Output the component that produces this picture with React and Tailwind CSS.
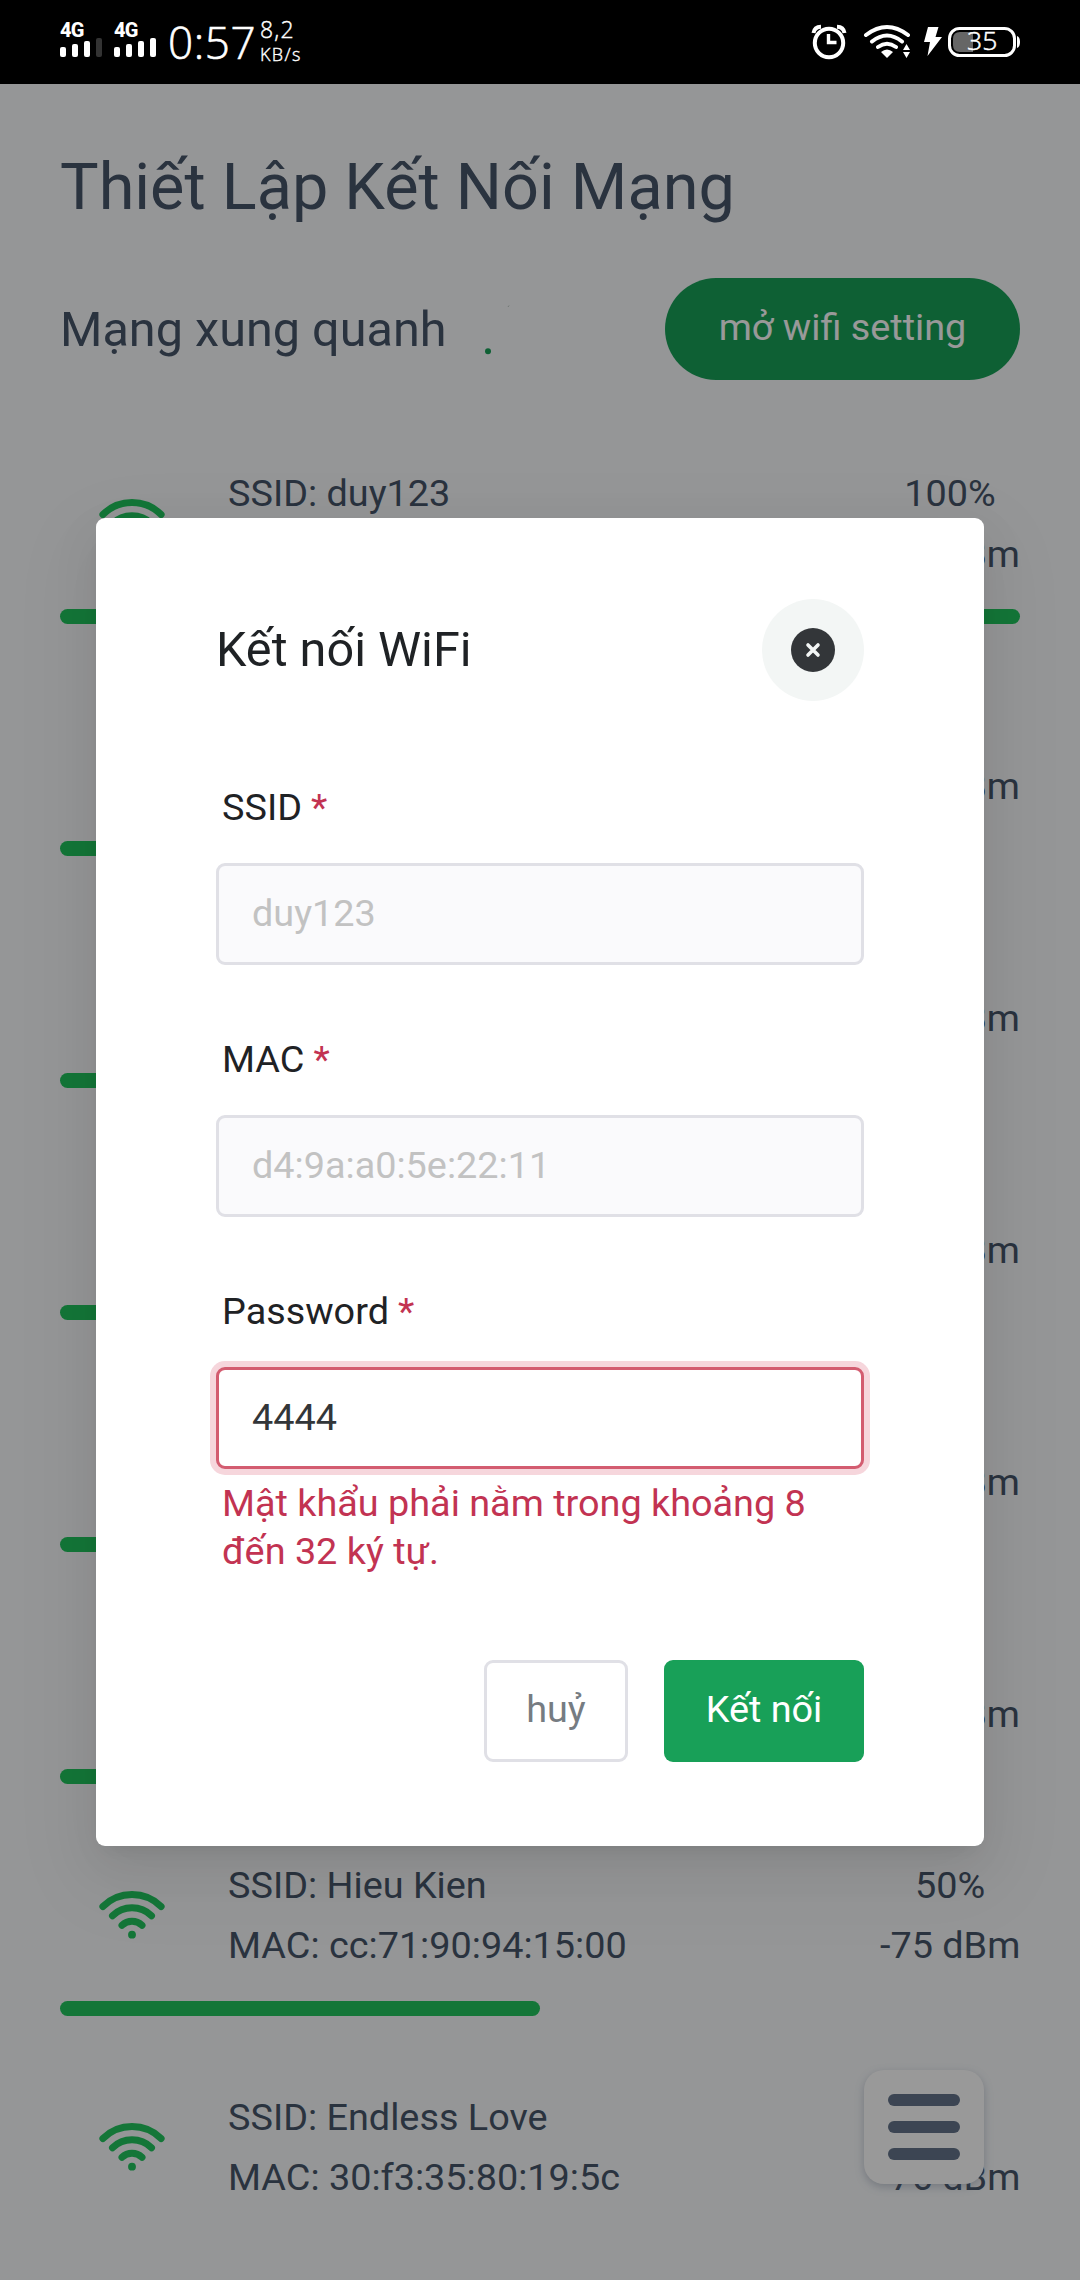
import React from "react";

const networks = [
  { ssid: "SSID: duy123", pct: "100%", dbm: "dBm", level: 100 },
  { dbm: "dBm", level: 80 },
  { dbm: "dBm", level: 74 },
  { dbm: "dBm", level: 70 },
  { dbm: "dBm", level: 64 },
  { dbm: "dBm", level: 56 },
  { ssid: "SSID: Hieu Kien", mac: "MAC: cc:71:90:94:15:00", pct: "50%", dbm: "-75 dBm", level: 50 },
  { ssid: "SSID: Endless Love", mac: "MAC: 30:f3:35:80:19:5c", dbm: "-76 dBm" },
];

function WifiIcon() {
  return (
    <svg viewBox="0 0 66 48" className="h-[48px] w-[66px] shrink-0 text-[#22c55e]" fill="none" stroke="currentColor" strokeWidth="7" strokeLinecap="round">
      <path d="M3.900 15.500a41.500 41.500 0 0 1 58.200 0" />
      <path d="M13.500 24.700a28 28 0 0 1 39 0" />
      <path d="M23 34.300a14.500 14.500 0 0 1 20 0" />
      <circle cx="33" cy="43.700" r="3.900" fill="currentColor" stroke="none" />
    </svg>
  );
}

function Signal({ last }) {
  return (
    <div className="flex h-[37px] w-[43px] flex-col">
      <span className="h-[16px] font-['Roboto'] text-[20px] leading-[19px] font-extrabold tracking-[-0.9px]">4G</span>
      <div className="flex h-[20px] shrink-0 items-end gap-[6px]">
        <i className="h-[10px] w-[6px] rounded-[2px] bg-white" />
        <i className="h-[13px] w-[6px] rounded-[2px] bg-white" />
        <i className="h-[16px] w-[6px] rounded-[2px] bg-white" />
        <i className={last ? "h-[19px] w-[6px] rounded-[2px] bg-white" : "h-[19px] w-[6px] rounded-[2px] bg-[#333]"} />
      </div>
    </div>
  );
}

function StatusBar() {
  return (
    <header className="flex h-[84px] shrink-0 items-start bg-black pl-[60px] text-white">
      <div className="mt-[21px] flex gap-[11px]">
        <Signal />
        <Signal last />
      </div>
      <span className="mt-[16px] ml-[11px] w-[92px] font-['Open_Sans'] text-[44px] leading-[52px] font-light tracking-[0.6px] whitespace-nowrap [-webkit-text-stroke:0.6px_white]">0:57</span>
      <div className="mt-[16px] font-['Open_Sans'] font-light [-webkit-text-stroke:0.4px_white]">
        <div className="text-[23px] leading-[26px] tracking-[1.2px]">8,2</div>
        <div className="text-[18px] leading-[25px] tracking-[1.4px]">KB/s</div>
      </div>
      <svg viewBox="0 0 210 40" className="mt-[22px] mr-[60px] ml-auto h-[40px] w-[210px]" fill="none">
        <g stroke="#fff">
          <circle cx="19" cy="21" r="14.2" strokeWidth="4" />
          <path d="M18.500 12v8.500h8" strokeWidth="3.4" />
          <path d="M3.500 11Q4.500 5 11 4.800" strokeWidth="4" />
          <path d="M27 4.800Q33.500 5 34.500 11" strokeWidth="4" />
          <path d="M56 13Q77 -3 98 13M62 19.500Q77 7.500 92 19.500M68 25Q77 18.500 86 25" strokeWidth="4" strokeLinecap="round" />
        </g>
        <path d="M71 30Q77 25 83 30L77 36Z" fill="#fff" />
        <path d="M93 28l3.500-6 3.500 6zM93 30l3.500 6 3.500-6z" fill="#fff" />
        <path d="M118 5h10.500l-3 10h6.500l-14.500 19 2.500-14h-6z" fill="#fff" />
        <rect x="139.500" y="6.500" width="65" height="27" rx="10" stroke="#fff" strokeWidth="3" />
        <path d="M163 10h-13q-7 0-7 7v6q0 7 7 7h13z" fill="#666" />
        <path d="M207 14q3 1 3 6t-3 6z" fill="#fff" />
        <text x="157" y="28.200" fill="#fff" stroke="#fff" strokeWidth="0.500" fontFamily="Open Sans" fontWeight="300" fontSize="26.500">35</text>
      </svg>
    </header>
  );
}

function NetworkRow({ n }) {
  return (
    <li className="flex h-[232px] flex-col">
      <div className="flex items-center">
        <div className="ml-[39px]"><WifiIcon /></div>
        <div className="ml-[63px] flex-1">
          <p className="h-[60px]">{n.ssid}</p>
          <p className="h-[60px]">{n.mac}</p>
        </div>
        <div className="flex w-[140px] flex-col items-center">
          <p className="h-[60px]">{n.pct}</p>
          <p className={n.mac ? "h-[60px] w-full text-right whitespace-nowrap" : "h-[60px] w-full pt-px text-right whitespace-nowrap"}>{n.dbm}</p>
        </div>
      </div>
      {n.level && <div className="mt-[26px] h-[15px] rounded-full bg-[#22c55e]" style={{ width: n.level + "%" }} />}
    </li>
  );
}

function Field({ label, value, error }) {
  return (
    <div className={error ? "" : "h-[252px]"}>
      <label className="flex h-[78px] gap-[9px] pl-[6px] leading-[44px] text-[#1f2225]">
        {label}<span className="text-[#c23352]">*</span>
      </label>
      <div
        className={
          error
            ? "flex h-[102px] items-center rounded-[9px] border-[3px] border-[#d35c70] bg-white px-[33px] pb-[2px] text-[#333639] shadow-[0_0_0_6px_#f6d6dc]"
            : "flex h-[102px] items-center rounded-[9px] border-[3px] border-[#e0e0e6] bg-[#fafafc] px-[33px] pb-[2px] text-[#c2c2c2]"
        }
      >
        {value}
      </div>
      {error && <p className="mt-[10px] pl-[6px] leading-[48px] text-[#c23352]">{error}</p>}
    </div>
  );
}

function Modal() {
  return (
    <section className="flex h-[1328px] w-[888px] flex-col rounded-[9px] bg-white px-[120px] pt-[81px] shadow-[0_9px_18px_-12px_rgba(0,0,0,.12),0_18px_48px_0_rgba(0,0,0,.08),0_27px_84px_24px_rgba(0,0,0,.03)]">
      <div className="flex h-[102px] items-center justify-between">
        <h2 className="text-[48.6px] text-[#1f2225]">Kết nối WiFi</h2>
        <button className="grid size-[102px] place-items-center rounded-full bg-[#f3f6f5]">
          <svg viewBox="0 0 44 44" className="size-[44px]">
            <circle cx="22" cy="22" r="22" fill="#333639" />
            <path d="M17 17l10 10M27 17l-10 10" stroke="#f3f6f5" strokeWidth="3.600" strokeLinecap="round" />
          </svg>
        </button>
      </div>
      <form className="mt-[84px] flex flex-col">
        <Field label="SSID" value="duy123" />
        <Field label="MAC" value="d4:9a:a0:5e:22:11" />
        <Field label="Password" value="4444" error="Mật khẩu phải nằm trong khoảng 8 đến 32 ký tự." />
      </form>
      <div className="mt-[85px] flex justify-end gap-[36px]">
        <button className="h-[102px] w-[144px] rounded-[9px] border-[3px] border-[#e0e0e6] pb-[5px] text-[#767c82]">huỷ</button>
        <button className="h-[102px] w-[200px] rounded-[9px] bg-[#18a058] pb-[5px] text-white">Kết nối</button>
      </div>
    </section>
  );
}

export default function App() {
  return (
    <div className="relative flex h-[2280px] w-[1080px] flex-col overflow-hidden bg-[#f8fafc] font-['Roboto',sans-serif] text-[37.8px] leading-[60px] text-[#475569]">
      <StatusBar />
      <main className="px-[60px] pt-[58px]">
        <h1 className="text-[64.8px] leading-[90px]">Thiết Lập Kết Nối Mạng</h1>
        <div className="mt-[46px] flex h-[102px] items-center">
          <h2 className="pt-[2px] text-[48.6px]">Mạng xung quanh</h2>
          <svg viewBox="0 0 54 54" className="ml-[30px] size-[54px]">
            <circle cx="11" cy="49.300" r="3" fill="#18a058" />
            <path d="M31 5l1-1.500" stroke="#a0b0a8" strokeWidth="0.700" />
          </svg>
          <button className="ml-auto h-[102px] w-[355px] rounded-full bg-[#18a058] pb-[5px] text-white">mở wifi setting</button>
        </div>
        <ul className="mt-[83px]">
          {networks.map((n, i) => (
            <NetworkRow key={i} n={n} />
          ))}
        </ul>
      </main>
      <button className="absolute top-[2070px] left-[864px] flex h-[114px] w-[120px] flex-col items-center justify-center gap-[15px] rounded-[20px] bg-white shadow-[0_3px_9px_rgba(100,116,139,.35)]">
        <i className="h-[12px] w-[72px] rounded-full bg-[#64748b]" />
        <i className="h-[12px] w-[72px] rounded-full bg-[#64748b]" />
        <i className="h-[12px] w-[72px] rounded-full bg-[#64748b]" />
      </button>
      <div className="absolute inset-x-0 top-[84px] bottom-0 flex justify-center bg-black/40 pt-[434px]">
        <Modal />
      </div>
    </div>
  );
}
